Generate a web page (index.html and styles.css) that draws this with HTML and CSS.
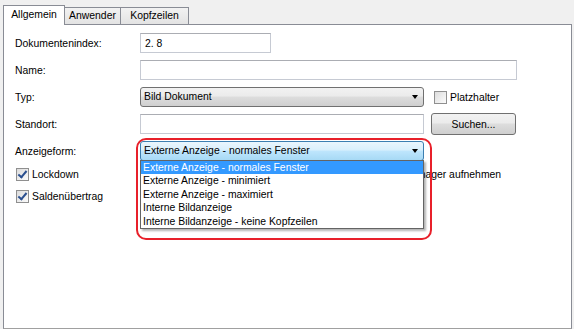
FILE: index.html
```html
<!DOCTYPE html>
<html lang="de">
<head>
    <meta charset="UTF-8">
    <title>Dokument</title>
    <link rel="stylesheet" href="styles.css">
</head>
<body>

<div class="tabs">
    <div class="tab aktiv">Allgemein</div>
    <div class="tab breit1">Anwender</div>
    <div class="tab breit2">Kopfzeilen</div>
</div>

<div class="panel">
    <div class="formular">
        <label>Dokumentenindex:</label>
        <div class="feld"><input class="eingabe kurz" type="text" value="2. 8"></div>

        <label>Name:</label>
        <div class="feld"><input class="eingabe lang" type="text"></div>

        <label>Typ:</label>
        <div class="feld">
            <div class="auswahl">Bild Dokument<span class="pfeil"></span></div>
            <span class="check"><span class="box"></span>Platzhalter</span>
        </div>

        <label>Standort:</label>
        <div class="feld">
            <input class="eingabe mittel" type="text">
            <button class="knopf">Suchen...</button>
        </div>

        <label>Anzeigeform:</label>
        <div class="feld">
            <div class="auswahl offen">Externe Anzeige - normales Fenster<span class="pfeil"></span>
                <ul class="liste">
                    <li class="markiert">Externe Anzeige - normales Fenster</li>
                    <li>Externe Anzeige - minimiert</li>
                    <li>Externe Anzeige - maximiert</li>
                    <li>Interne Bildanzeige</li>
                    <li>Interne Bildanzeige - keine Kopfzeilen</li>
                </ul>
                <div class="markierung"></div>
            </div>
        </div>
    </div>

    <div class="optionen">
        <div class="zeile">
            <span class="check"><span class="box an"></span>Lockdown</span>
            <span class="check rechts"><span class="box"></span>Im Manager aufnehmen</span>
        </div>
        <div class="zeile">
            <span class="check"><span class="box an"></span>Saldenübertrag</span>
        </div>
    </div>
</div>

</body>
</html>
```

FILE: styles.css
```css
body {
    margin: 0;
    background: #f0f0f0;
    font-family: "Liberation Sans", Arial, sans-serif;
    font-size: 10.4px;
    color: #000;
    height: 329px;
    overflow: hidden;
}
.tabs {
    display: flex;
    align-items: flex-end;
    height: 25px;
    padding-left: 3px;
    position: relative;
    z-index: 2;
}
.tab {
    width: 57px;
    height: 17px;
    line-height: 16px;
    text-align: center;
    margin-right: -1px;
    margin-bottom: 1px;
    border: 1px solid #898c95;
    border-bottom: none;
    background: linear-gradient(#f2f2f2, #e3e3e3);
    box-sizing: border-box;
}
.tab.aktiv {
    width: 62px;
    height: 20px;
    line-height: 18px;
    margin-bottom: 0;
    background: #fff;
}
.tab.breit2 {
    width: 69px;
}
.panel {
    margin: -1px 2px 0 3px;
    height: 305px;
    border: 1px solid #898c95;
    border-bottom-color: #a0a0a0;
    background: #fff;
    box-sizing: border-box;
    padding: 8px 0 0 11px;
}
.formular {
    display: grid;
    grid-template-columns: 125px auto;
    grid-auto-rows: 20px;
    row-gap: 7px;
    align-items: center;
}
.feld {
    display: flex;
    align-items: center;
    height: 20px;
}
.eingabe {
    height: 20px;
    box-sizing: border-box;
    border: 1px solid #c6cad3;
    border-top-color: #abadb3;
    font: inherit;
    padding: 0 4px;
    outline: none;
}
.eingabe.kurz { width: 131px; }
.eingabe.lang { width: 377px; }
.eingabe.mittel { width: 284px; }
.auswahl {
    position: relative;
    width: 284px;
    height: 20px;
    box-sizing: border-box;
    border: 1px solid #707070;
    border-radius: 3px;
    background: linear-gradient(#f2f2f2 0%, #ebebeb 45%, #dddddd 50%, #cfcfcf 100%);
    padding-left: 3px;
    line-height: 18px;
}
.auswahl.offen {
    border-color: #3c7fb1;
    background: linear-gradient(#eaf6fd 0%, #d9f0fc 45%, #bee6fd 50%, #a7d9f5 100%);
}
.pfeil {
    position: absolute;
    right: 5px;
    top: 7px;
    border-left: 3.5px solid transparent;
    border-right: 3.5px solid transparent;
    border-top: 4px solid #000;
}
.liste {
    position: absolute;
    top: 18px;
    left: -1px;
    width: 284px;
    margin: 0;
    padding: 0;
    list-style: none;
    background: #fff;
    border: 1px solid #646464;
    box-sizing: border-box;
    box-shadow: 2px 2px 2px rgba(0, 0, 0, 0.3);
    z-index: 3;
}
.liste li {
    height: 13.4px;
    line-height: 13px;
    padding-left: 2px;
    white-space: nowrap;
}
.liste li.markiert {
    background: #3399ff;
    color: #fff;
}
.markierung {
    position: absolute;
    left: -5px;
    top: -4px;
    width: 296px;
    height: 102px;
    box-sizing: border-box;
    border: 2px solid #e8202a;
    border-radius: 10px;
    z-index: 4;
}
.check {
    display: inline-flex;
    align-items: center;
    gap: 3px;
}
.feld .check {
    margin-left: 10px;
}
.box {
    width: 13px;
    height: 13px;
    box-sizing: border-box;
    border: 1px solid #8f8f8f;
    background: linear-gradient(135deg, #dcdcdc, #fbfbfb);
    position: relative;
}
.box.an::after {
    content: "";
    position: absolute;
    left: 3px;
    top: 0px;
    width: 3px;
    height: 7px;
    border-right: 2px solid #2a4f8f;
    border-bottom: 2px solid #2a4f8f;
    transform: rotate(40deg);
}
.knopf {
    margin-left: 7px;
    width: 85px;
    height: 22px;
    font: inherit;
    border: 1px solid #707070;
    border-radius: 3px;
    background: linear-gradient(#f2f2f2 0%, #ebebeb 45%, #dddddd 50%, #cfcfcf 100%);
    padding: 0;
}
.optionen {
    margin-top: 2px;
    padding-left: 1px;
}
.zeile {
    display: flex;
    align-items: center;
    height: 22px;
}
.check.rechts {
    margin-left: 296px;
}
```
